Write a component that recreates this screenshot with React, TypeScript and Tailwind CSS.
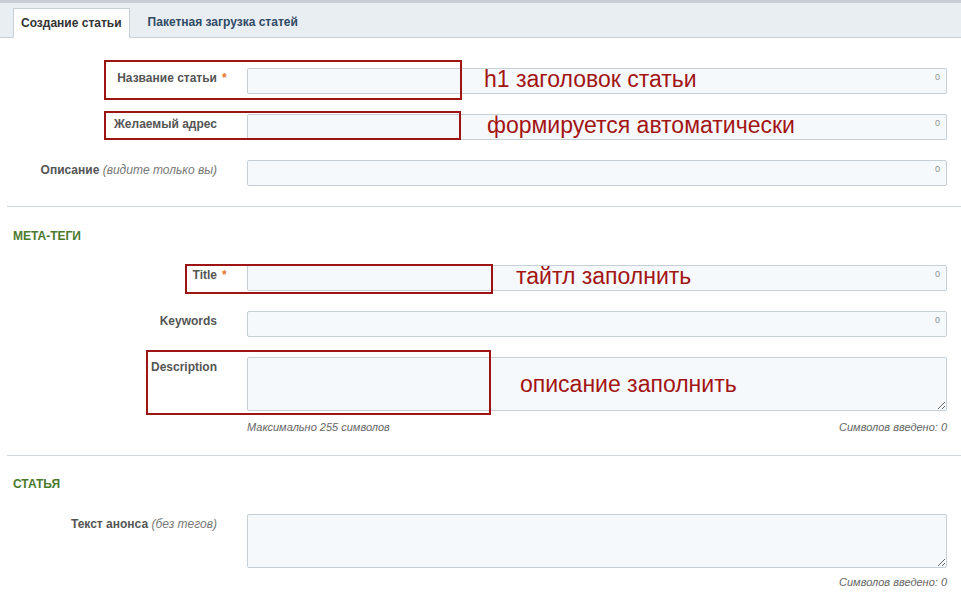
import React from "react";

const font = "font-['Liberation_Sans',Arial,sans-serif]";

function Label({
  children,
  star,
}: {
  children: React.ReactNode;
  star?: boolean;
}) {
  return (
    <div className="w-[217px] shrink-0 text-right pt-[3px] text-[12px] leading-[14px] font-bold text-[#555]">
      <span>{children}</span>
      {star && (
        <span className="inline-block w-0 whitespace-nowrap text-left">
          <span className="ml-[5px] text-[#e2782e]">*</span>
        </span>
      )}
    </div>
  );
}

function InputRow({
  label,
  star,
  className = "",
}: {
  label: React.ReactNode;
  star?: boolean;
  className?: string;
}) {
  return (
    <div className={"flex " + className}>
      <Label star={star}>{label}</Label>
      <div className="ml-[30px] w-[700px] h-[26px] rounded-[2px] border border-[#c6cfd6] bg-[#f6f9fc] flex justify-end items-start pt-[3px] pr-[6px]">
        <span className="text-[9px] leading-[10px] text-[#8a8f94]">0</span>
      </div>
    </div>
  );
}

function TextareaRow({
  label,
  className = "",
}: {
  label: React.ReactNode;
  className?: string;
}) {
  return (
    <div className={"flex " + className}>
      <Label>{label}</Label>
      <textarea
        readOnly
        className="block ml-[30px] w-[700px] h-[54px] rounded-[2px] border border-[#c6cfd6] bg-[#f6f9fc] outline-none"
      />
    </div>
  );
}

function Separator({ className = "" }: { className?: string }) {
  return <div className={"ml-[7px] h-px bg-[#cdd6dc] " + className} />;
}

function Heading({ children, className = "" }: { children: React.ReactNode; className?: string }) {
  return (
    <div className={"pl-[13px] text-[12px] leading-[14px] font-bold text-[#4a7a2c] " + className}>
      {children}
    </div>
  );
}

const note = "absolute text-[23px] leading-[26px] text-[#a31414] whitespace-nowrap";
const box = "absolute border-2 border-[#9c1414]";

export default function App() {
  return (
    <div className={"relative w-[961px] h-[601px] overflow-hidden bg-white " + font}>
      <div className="h-[3px] bg-[#c8ced3]" />
      <div className="h-[35px] bg-[#e9eef2] border-b border-[#c6cfd6] flex items-end pl-[13px]">
        <div className="h-[30px] -mb-px px-[7px] flex items-center bg-white border border-[#c6cfd6] border-b-white text-[12px] font-bold text-[#333]">
          Создание статьи
        </div>
        <div className="h-[30px] pl-[18px] flex items-center text-[12px] font-bold text-[#2f4a66]">
          Пакетная загрузка статей
        </div>
      </div>

      <div className="pt-[30px] flex flex-col gap-[20px]">
        <InputRow label="Название статьи" star />
        <InputRow label="Желаемый адрес" />
        <InputRow
          label={
            <>
              Описание <span className="font-normal italic text-[#777]">(видите только вы)</span>
            </>
          }
        />
      </div>

      <Separator className="mt-[20px]" />
      <Heading className="mt-[22px]">МЕТА-ТЕГИ</Heading>

      <div className="mt-[22px] flex flex-col gap-[20px]">
        <InputRow label="Title" star />
        <InputRow label="Keywords" />
        <TextareaRow label="Description" />
      </div>
      <div className="mt-[9px] ml-[247px] w-[700px] flex justify-between text-[11px] leading-[14px] italic text-[#666]">
        <span>Максимально 255 символов</span>
        <span>Символов введено: 0</span>
      </div>

      <Separator className="mt-[21px]" />
      <Heading className="mt-[21px]">СТАТЬЯ</Heading>

      <TextareaRow
        className="mt-[23px]"
        label={
          <>
            Текст анонса <span className="font-normal italic text-[#777]">(без тегов)</span>
          </>
        }
      />
      <div className="mt-[7px] ml-[247px] w-[700px] flex justify-end text-[11px] leading-[14px] italic text-[#666]">
        <span>Символов введено: 0</span>
      </div>

      {/* annotation overlays drawn over the form */}
      <div className={box + " left-[104px] top-[60px] w-[358px] h-[40px]"} />
      <div className={box + " left-[104px] top-[111px] w-[357px] h-[29px]"} />
      <div className={box + " left-[185px] top-[264px] w-[308px] h-[30px]"} />
      <div className={box + " left-[146px] top-[350px] w-[345px] h-[65px]"} />

      <div className={note + " left-[484px] top-[66px]"}>h1 заголовок статьи</div>
      <div className={note + " left-[487px] top-[112px]"}>формируется автоматически</div>
      <div className={note + " left-[516px] top-[263px]"}>тайтл заполнить</div>
      <div className={note + " left-[520px] top-[371px]"}>описание заполнить</div>
    </div>
  );
}
